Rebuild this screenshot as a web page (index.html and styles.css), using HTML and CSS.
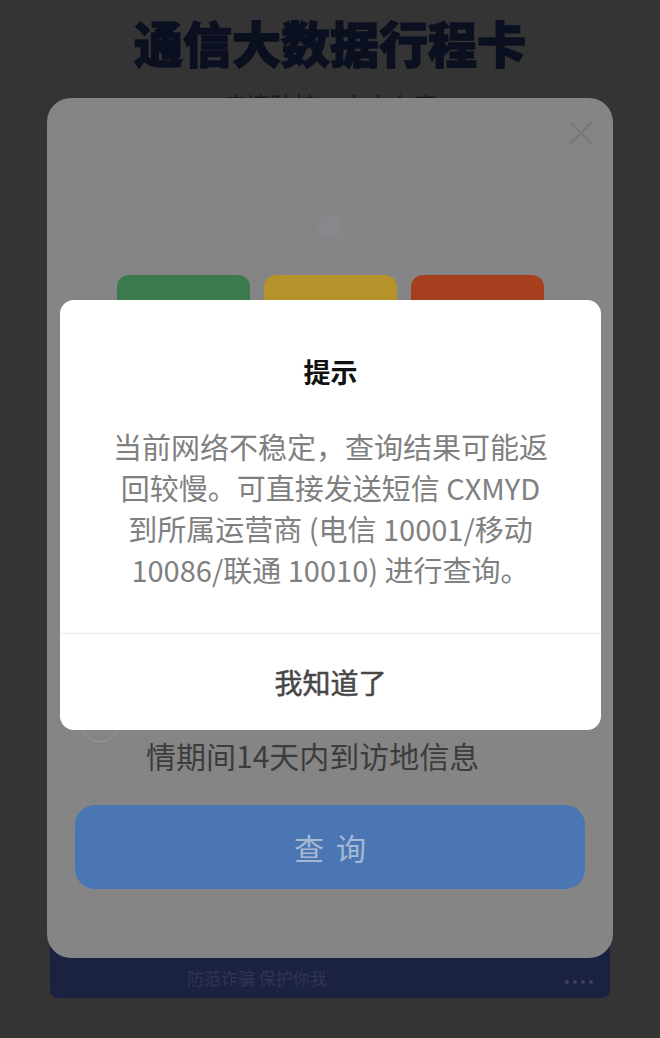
FILE: index.html
```html
<!DOCTYPE html>
<html lang="zh-CN">
<head>
<meta charset="utf-8">
<title>通信大数据行程卡</title>
<link rel="stylesheet" href="styles.css">
</head>
<body>
<div class="page">
  <h1 class="brand">通信大数据行程卡</h1>
  <p class="slogan">疫情防控，人人有责</p>
  <div class="footer-bar">
    <span class="footer-text">防范诈骗 保护你我</span>
    <span class="footer-dots"><i></i><i></i><i></i><i></i></span>
  </div>
</div>

<div class="sheet">
  <div class="sheet-head">
    <svg class="close" width="26" height="26" viewBox="0 0 26 26" aria-hidden="true">
      <path d="M3 3 L23 23 M23 3 L3 23" stroke="#787878" stroke-width="2.4" stroke-linecap="round" fill="none"/>
    </svg>
  </div>
  <div class="spinner"></div>
  <div class="levels">
    <div class="level level-green"></div>
    <div class="level level-yellow"></div>
    <div class="level level-red"></div>
  </div>
  <div class="consent">
    <span class="check"></span>
    <p class="consent-text">情期间14天内到访地信息</p>
  </div>
  <div class="query-btn"><span>查</span><span>询</span></div>
</div>

<div class="dialog" role="dialog">
  <div class="dialog-title">提示</div>
  <p class="dialog-body">当前网络不稳定，查询结果可能返<br>回较慢。可直接发送短信 CXMYD<br>到所属运营商 (电信 10001/移动<br>10086/联通 10010) 进行查询。</p>
  <div class="dialog-action">我知道了</div>
</div>
</body>
</html>
```

FILE: styles.css
```css
* { box-sizing: border-box; }

html, body {
  margin: 0;
  padding: 0;
}

body {
  width: 660px;
  height: 1038px;
  overflow: hidden;
  position: relative;
  background: #343434;
  font-family: "Noto Sans CJK SC", "Noto Sans", sans-serif;
}

/* background page */
.page {
  display: flex;
  flex-direction: column;
  align-items: center;
  padding-top: 12px;
}

.brand {
  margin: 0;
  font-size: 49px;
  line-height: 60px;
  font-weight: 900;
  color: #0b1020;
  -webkit-text-stroke: 1.4px #0b1020;
  letter-spacing: 0;
}

.slogan {
  margin: 21px 0 0;
  font-size: 24px;
  line-height: 24px;
  color: #1a1a1a;
}

.footer-bar {
  margin-top: 813px;
  width: 560px;
  height: 68px;
  background: #1b2141;
  border-radius: 0 0 8px 8px;
  display: flex;
  align-items: flex-end;
  justify-content: space-between;
  padding: 0 17px 12px 137px;
}

.footer-text {
  font-size: 17px;
  line-height: 17px;
  color: #2f3650;
}

.footer-dots {
  display: flex;
  gap: 4px;
  padding-bottom: 2px;
}

.footer-dots i {
  width: 4px;
  height: 4px;
  border-radius: 50%;
  background: #3d435e;
}

/* dimmed modal sheet */
.sheet {
  position: absolute;
  left: 47px;
  top: 98px;
  width: 566px;
  height: 860px;
  background: #858585;
  border-radius: 24px;
  display: flex;
  flex-direction: column;
}

.sheet-head {
  display: flex;
  justify-content: flex-end;
  padding: 22px 19px 0;
  height: 48px;
}

.spinner {
  align-self: center;
  margin-top: 69px;
  width: 24px;
  height: 24px;
  border-radius: 50%;
  background: #88898e;
  filter: blur(3px);
}

.levels {
  margin-top: 36px;
  display: flex;
  justify-content: center;
  gap: 14px;
}

.level {
  width: 133px;
  height: 50px;
  border-radius: 12px;
}

.level-green { background: #3b7a4c; }
.level-yellow { background: #b5922a; }
.level-red { background: #a63f1e; }

.consent {
  margin-top: 367px;
  padding-left: 33px;
  display: flex;
  align-items: flex-start;
  gap: 26px;
}

.check {
  flex: none;
  margin-top: 10px;
  width: 40px;
  height: 40px;
  border-radius: 50%;
  border: 1.5px solid #9a9a9a;
}

.consent-text {
  margin: 42px 0 0;
  font-size: 30px;
  line-height: 42px;
  color: #3c3c3c;
}

.query-btn {
  margin: 29px 28px 0;
  height: 84px;
  border-radius: 20px;
  background: #4a77b4;
  display: flex;
  align-items: center;
  justify-content: center;
  gap: 12px;
  font-size: 30px;
  color: #a8b8d2;
}

/* alert dialog */
.dialog {
  position: absolute;
  left: 60px;
  top: 300px;
  width: 541px;
  height: 430px;
  background: #ffffff;
  border-radius: 14px;
  display: flex;
  flex-direction: column;
  align-items: center;
}

.dialog-title {
  margin-top: 52px;
  font-size: 27px;
  line-height: 40px;
  font-weight: 700;
  color: #111111;
}

.dialog-body {
  margin: 34px 0 0;
  font-size: 29px;
  line-height: 41px;
  color: #808080;
  text-align: center;
  white-space: nowrap;
}

.dialog-action {
  margin-top: auto;
  width: 100%;
  height: 97px;
  border-top: 1px solid #ececec;
  display: flex;
  align-items: center;
  justify-content: center;
  font-size: 28px;
  font-weight: 400;
  -webkit-text-stroke: 0.5px #474747;
  color: #474747;
}
```
